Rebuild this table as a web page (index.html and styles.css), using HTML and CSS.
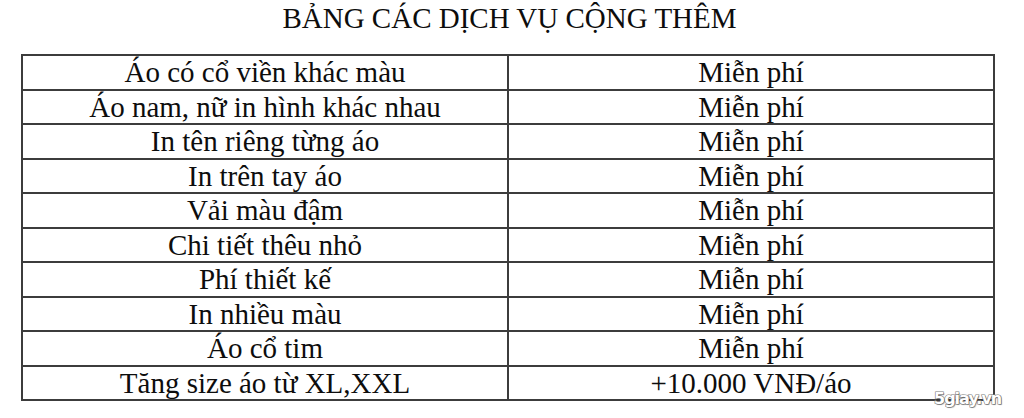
FILE: index.html
```html
<!DOCTYPE html>
<html lang="vi">
<head>
<meta charset="utf-8">
<title>Bảng các dịch vụ cộng thêm</title>
<link rel="stylesheet" href="styles.css">
</head>
<body>
<div class="page">
  <h1 class="title">BẢNG CÁC DỊCH VỤ CỘNG THÊM</h1>
  <table class="services">
    <tbody>
      <tr><td>Áo có cổ viền khác màu</td><td>Miễn phí</td></tr>
      <tr><td>Áo nam, nữ in hình khác nhau</td><td>Miễn phí</td></tr>
      <tr><td>In tên riêng từng áo</td><td>Miễn phí</td></tr>
      <tr><td>In trên tay áo</td><td>Miễn phí</td></tr>
      <tr><td>Vải màu đậm</td><td>Miễn phí</td></tr>
      <tr><td>Chi tiết thêu nhỏ</td><td>Miễn phí</td></tr>
      <tr><td>Phí thiết kế</td><td>Miễn phí</td></tr>
      <tr><td>In nhiều màu</td><td>Miễn phí</td></tr>
      <tr><td>Áo cổ tim</td><td>Miễn phí</td></tr>
      <tr><td>Tăng size áo từ XL,XXL</td><td>+10.000 VNĐ/áo</td></tr>
    </tbody>
  </table>
  <div class="watermark">5giay.vn</div>
</div>
</body>
</html>
```

FILE: styles.css
```css
html, body {
  margin: 0;
  padding: 0;
  background: #ffffff;
}

.page {
  position: relative;
  width: 1024px;
  height: 418px;
  overflow: hidden;
  font-family: "Liberation Serif", "Times New Roman", serif;
  color: #0d0d0d;
}

.title {
  margin: 0;
  padding-top: 1px;
  padding-right: 5px;
  height: 53px;
  font-size: 29px;
  font-weight: normal;
  line-height: 34px;
  text-align: center;
}

.services {
  margin-left: 21px;
  width: 974px;
  border-collapse: collapse;
  table-layout: fixed;
}

.services td {
  width: 50%;
  height: 32.5px;
  padding: 0;
  border: 2px solid #3c3c3c;
  font-size: 29px;
  line-height: 30px;
  text-align: center;
  vertical-align: middle;
  white-space: nowrap;
}

.watermark {
  position: absolute;
  left: 934px;
  top: 389px;
  font-family: "DejaVu Sans", sans-serif;
  font-size: 16px;
  font-weight: bold;
  letter-spacing: -1px;
  color: #ffffff;
  -webkit-text-stroke: 1.2px #7d7d7d;
  paint-order: stroke fill;
  text-shadow: 1px 1px 1px rgba(0,0,0,0.3);
}
```
